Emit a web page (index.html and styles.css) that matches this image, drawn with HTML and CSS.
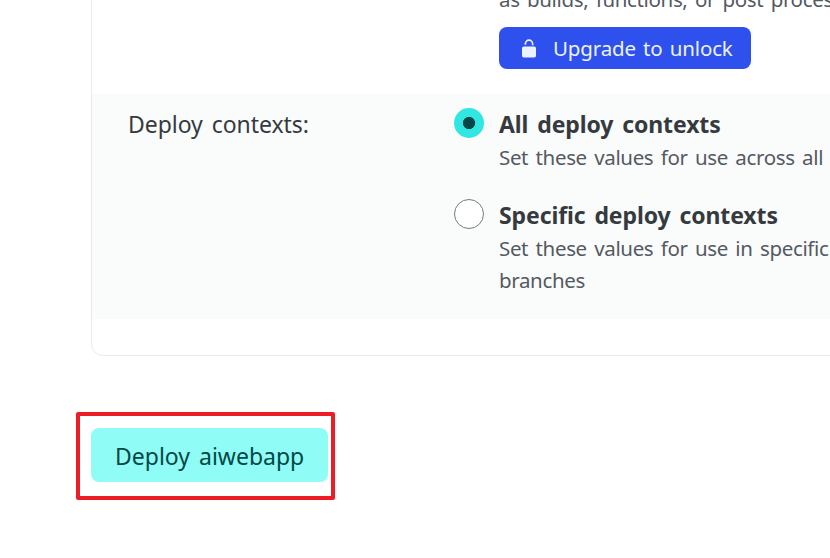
FILE: index.html
```html
<!DOCTYPE html>
<html lang="en">
<head>
<meta charset="utf-8">
<title>Deploy</title>
<link rel="stylesheet" href="styles.css">
</head>
<body>
<main class="page">
  <section class="panel">
    <div class="row row-scopes">
      <div class="field">
        <p class="hint">as builds, functions, or post process</p>
        <button class="upgrade" type="button">
          <svg class="lock" viewBox="0 0 14 19" width="14" height="19" aria-hidden="true">
            <path d="M3.4 5.8V4.8a3.6 3.6 0 0 1 7.2 0v1.4" fill="none" stroke="currentColor" stroke-width="1.7"/>
            <rect x="0" y="7.5" width="14" height="11" rx="1.8" fill="currentColor"/>
          </svg>
          <span>Upgrade to unlock</span>
        </button>
      </div>
    </div>
    <div class="row row-contexts">
      <div class="label"><span>Deploy contexts:</span></div>
      <div class="options">
        <label class="option">
          <span class="radio radio-on"></span>
          <span class="option-body">
            <strong class="title">All deploy contexts</strong>
            <span class="hint">Set these values for use across all</span>
          </span>
        </label>
        <label class="option">
          <span class="radio"></span>
          <span class="option-body">
            <strong class="title">Specific deploy contexts</strong>
            <span class="hint">Set these values for use in specific<br>branches</span>
          </span>
        </label>
      </div>
    </div>
  </section>
  <div class="highlight">
    <button class="deploy" type="button"><span>Deploy aiwebapp</span></button>
  </div>
</main>
</body>
</html>
```
FILE: styles.css
```css
* { box-sizing: border-box; }
body {
  margin: 0;
  height: 558px;
  overflow: hidden;
  background: #fff;
  color: #353a3e;
  font-family: "Noto Sans", "Open Sans", sans-serif;
  font-size: 23px;
}
p { margin: 0; }
button { border: 0; font: inherit; }
.page { overflow: hidden; height: 558px; }
.panel {
  width: 900px;
  height: 376px;
  margin: -20px 0 0 91px;
  border: 1px solid #e9ebeb;
  border-radius: 12px;
}
.row { display: flex; }
.row-scopes { height: 113px; padding: 2px 0 0 407px; }
.hint {
  display: block;
  color: #545a61;
  font-size: 20.5px;
  line-height: 32px;
  white-space: nowrap;
  letter-spacing: -0.35px;
  word-spacing: 2.4px;
}
.upgrade {
  display: flex;
  align-items: center;
  width: 252px;
  height: 42px;
  margin-top: 12px;
  padding: 0 0 0 23px;
  border-radius: 8px;
  background: #2e51ed;
  color: #ecf2ff;
  font-size: 20.5px;
  letter-spacing: -0.15px;
  word-spacing: 2px;
  white-space: nowrap;
}
.lock { margin-right: 17px; }
.row-contexts { height: 225px; padding: 14px 0 0 36px; background: #fafbfb; }
.label { width: 326px; line-height: 32px; }
.label span { letter-spacing: -0.05px; word-spacing: 3px; }
.option { display: flex; height: 91px; }
.option-body { margin-top: -1px; }
.radio {
  width: 30px;
  height: 30px;
  margin-right: 15px;
  border: 1px solid #777b80;
  border-radius: 50%;
  background: #fff;
}
.radio-on { border: 0; background: radial-gradient(circle, #014847 5.7px, #32e6e2 6.5px); }
.title {
  display: block;
  line-height: 34px;
  white-space: nowrap;
  letter-spacing: -0.1px;
  word-spacing: 3px;
}
.highlight {
  width: 259px;
  height: 88px;
  margin: 56px 0 0 76px;
  padding: 12px 11px;
  border: 4px solid #ee1c25;
  border-radius: 2px;
}
.deploy {
  width: 237px;
  height: 54px;
  padding: 2px 0 0 24px;
  border-radius: 8px;
  background: #90fcf6;
  color: #014847;
  text-align: left;
  white-space: nowrap;
  word-spacing: 3px;
}
```
